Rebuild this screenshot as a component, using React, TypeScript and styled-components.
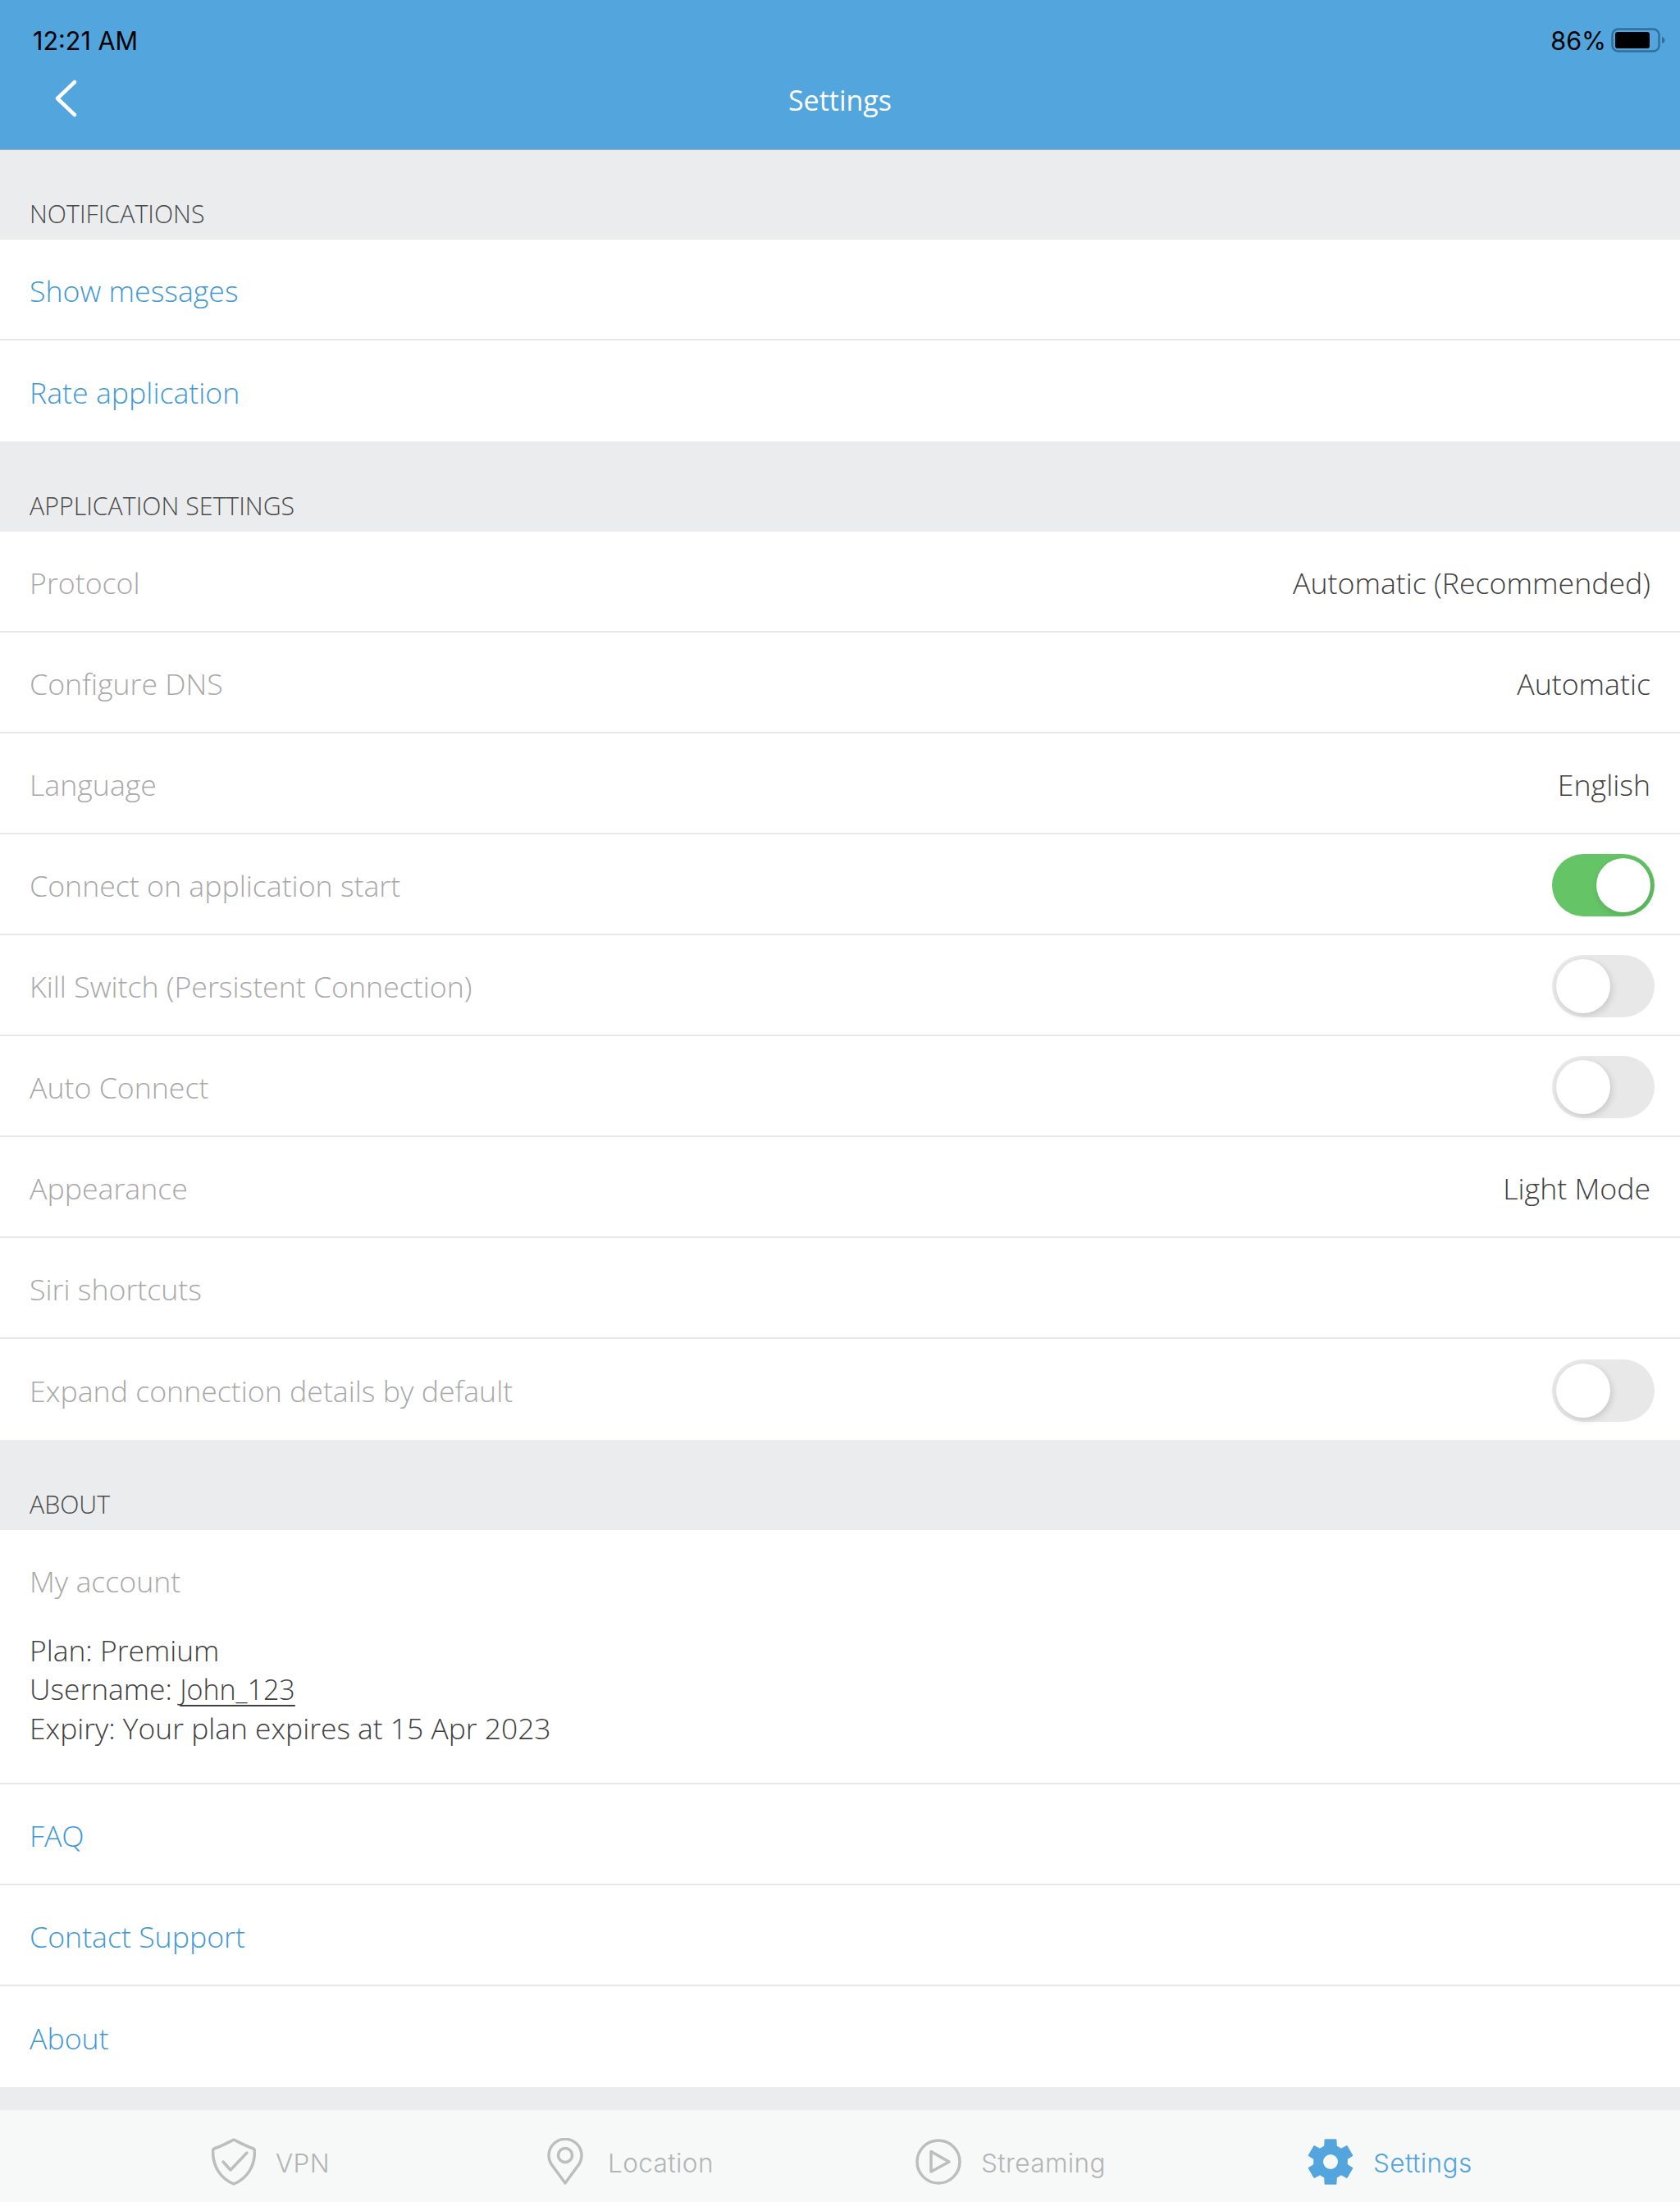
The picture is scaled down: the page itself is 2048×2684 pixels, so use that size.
import React from 'react';
import styled, { createGlobalStyle } from 'styled-components';

const Global = createGlobalStyle`
  html, body { margin: 0; padding: 0; background: #ebecee; }
  body { font-family: "Open Sans", "Liberation Sans", sans-serif; }
`;
const Page = styled.div`
  width: 2048px; height: 2684px; display: flex; flex-direction: column; background: #ebecee; overflow: hidden;
`;
const Header = styled.header`
  height: 182px; background: #53a5dd; border-bottom: 1px solid #a9adb0; display: flex; flex-direction: column; flex: none;
`;
const StatusBar = styled.div`
  display: flex; justify-content: space-between; align-items: center;
  height: 38px; padding: 30px 18px 0 40px; color: #000;
  font-family: Inter, "Liberation Sans", sans-serif; font-size: 30.500px;
`;
const StatusRight = styled.div`display: flex; align-items: center; gap: 6px;`;
const NavBar = styled.div`
  height: 108px; display: grid; grid-template-columns: 1fr auto 1fr; align-items: center; padding-left: 66px;
`;
const BackIcon = styled.svg`margin-bottom: 5px;`;
const Title = styled.div`color: #fff; font-size: 34px; font-weight: 400; margin-left: -66px;`;
const SectionTitle = styled.div<{ $h: number }>`
  height: ${p => p.$h}px; box-sizing: border-box; padding: 0 36px 10px; display: flex; align-items: flex-end;
  font-size: 30.300px; font-weight: 300; line-height: 42px; color: #4a4a4a; flex: none;
`;
const List = styled.div`background: #fff; flex: none;`;
const Row = styled.div`
  height: 123px; box-sizing: border-box; padding: 2px 36px 0; display: flex; align-items: center; justify-content: space-between;
  font-size: 35.700px; font-weight: 300; border-bottom: 2px solid #e8e8e8;
  &:last-child { border-bottom: none; }
`;
const LinkText = styled.span`color: #4098d8;`;
const Muted = styled.span`color: #a8a8a8;`;
const Value = styled.span`color: #404040;`;
const Toggle = styled.div<{ $on?: boolean }>`
  position: relative; width: 125px; height: 76px; border-radius: 38px; margin-right: -5px;
  background: ${p => (p.$on ? '#64c466' : '#e8e8e8')};
`;
const Knob = styled.div<{ $on?: boolean }>`
  position: absolute; top: 5px; width: 66px; height: 66px; border-radius: 50%; background: #fff;
  ${p => (p.$on ? 'right: 5px;' : 'left: 5px;')}
  box-shadow: 2px 3px 8px rgba(0,0,0,.14);
`;
const Account = styled.div`
  height: 310px; box-sizing: border-box; padding: 37px 36px 0; border-bottom: 2px solid #e8e8e8; font-size: 35.400px; font-weight: 300; color: #404040;
`;
const AccountHead = styled.div`line-height: 50px; margin-bottom: 36px; font-size: 35.700px;`;
const AccountLine = styled.div`line-height: 47px;`;
const Username = styled.span`font-size: 34px; text-decoration: underline; text-underline-offset: 6px; text-decoration-thickness: 2px;`;
const Spacer = styled.div`height: 28px; flex: none;`;
const TabBar = styled.nav`
  flex: 1; background: #f7f8f8; display: flex; align-items: center; padding: 20px 0 6px 258px;
`;
const Tab = styled.div<{ $active?: boolean; $w?: number }>`
  display: flex; align-items: center; gap: 24px; font-family: Inter, "Liberation Sans", sans-serif; font-weight: 300;
  font-size: 31.500px; letter-spacing: 0.4px; color: ${p => (p.$active ? '#53a5dd' : '#b4b4b4')};
  ${p => (p.$w ? `width: ${p.$w}px;` : '')}
`;
const TabLabel = styled.span<{ $offset?: number }>`
  padding-top: 2px; margin-left: ${p => p.$offset ?? 0}px;
`;

const Battery = () => (
  <svg width="66" height="30" viewBox="0 0 66 30">
    <rect x="1.500" y="1.500" width="57" height="27" rx="7" fill="none" stroke="#2f6f9c" strokeWidth="2.500" />
    <rect x="5" y="5" width="42" height="20" rx="3" fill="#000" />
    <path d="M62 11c2 .5 3.500 2 3.500 4s-1.500 3.500-3.500 4z" fill="#2f6f9c" />
  </svg>
);
const Back = () => (
  <BackIcon width="28" height="46" viewBox="0 0 28 46"><path d="M25 3 4 23l21 20" fill="none" stroke="#fff" strokeWidth="4.500" strokeLinecap="round" strokeLinejoin="round" /></BackIcon>
);
const Shield = () => (
  <svg width="54" height="58" viewBox="0 0 54 58" fill="none" stroke="#bdbdbd" strokeWidth="3.500" strokeLinejoin="round" strokeLinecap="round">
    <path d="M27 2C33 5 42 10 50 12.500c2 .6 2.500 1.500 2.500 3.500C52.500 34 44 49 27 56 10 49 1.500 34 1.500 16c0-2 .5-2.900 2.500-3.500C12 10 21 5 27 2z" />
    <path d="M14 29l9 10 20-21" />
  </svg>
);
const Pin = () => (
  <svg width="44" height="58" viewBox="0 0 44 58" fill="none" stroke="#bdbdbd" strokeWidth="3.500" strokeLinejoin="round">
    <path d="M22 55 4.800 31.500a20 20 0 1 1 34.400 0z" />
    <circle cx="22" cy="21" r="8.500" />
  </svg>
);
const Play = () => (
  <svg width="56" height="56" viewBox="0 0 56 56" fill="none" stroke="#bdbdbd" strokeWidth="3.500" strokeLinejoin="round">
    <circle cx="28" cy="28" r="26" />
    <path d="M19 15.500 41 28 19 40z" />
  </svg>
);
const gearPath = (() => {
  const pts: string[] = [];
  const teeth = 6, cx = 28, cy = 28, ro = 28, ri = 20.500;
  for (let i = 0; i < teeth; i++) {
    const a = (i / teeth) * Math.PI * 2 - Math.PI / 2;
    const p = (r: number, t: number) => `${(cx + r * Math.cos(t)).toFixed(2)} ${(cy + r * Math.sin(t)).toFixed(2)}`;
    pts.push(p(ri, a - 0.36), p(ro, a - 0.25), p(ro, a + 0.25), p(ri, a + 0.36));
  }
  return `M${pts.join('L')}Z`;
})();
const Gear = () => (
  <svg width="56" height="56" viewBox="0 0 56 56">
    <path d={gearPath} fill="#53a5dd" stroke="#53a5dd" strokeWidth="1" strokeLinejoin="round" />
    <circle cx="28" cy="28" r="9" fill="#f7f8f8" />
  </svg>
);

const Switch = ({ on }: { on?: boolean }) => <Toggle $on={on}><Knob $on={on} /></Toggle>;

export default function App() {
  return (
    <Page>
      <Global />
      <Header>
        <StatusBar>
          <span>12:21 AM</span>
          <StatusRight><span>86%</span><Battery /></StatusRight>
        </StatusBar>
        <NavBar>
          <Back />
          <Title>Settings</Title>
          <span />
        </NavBar>
      </Header>
      <SectionTitle $h={109}>NOTIFICATIONS</SectionTitle>
      <List>
        <Row><LinkText>Show messages</LinkText></Row>
        <Row><LinkText>Rate application</LinkText></Row>
      </List>
      <SectionTitle $h={110}>APPLICATION SETTINGS</SectionTitle>
      <List>
        <Row><Muted>Protocol</Muted><Value>Automatic (Recommended)</Value></Row>
        <Row><Muted>Configure DNS</Muted><Value>Automatic</Value></Row>
        <Row><Muted>Language</Muted><Value>English</Value></Row>
        <Row><Muted>Connect on application start</Muted><Switch on /></Row>
        <Row><Muted>Kill Switch (Persistent Connection)</Muted><Switch /></Row>
        <Row><Muted>Auto Connect</Muted><Switch /></Row>
        <Row><Muted>Appearance</Muted><Value>Light Mode</Value></Row>
        <Row><Muted>Siri shortcuts</Muted></Row>
        <Row><Muted>Expand connection details by default</Muted><Switch /></Row>
      </List>
      <SectionTitle $h={110}>ABOUT</SectionTitle>
      <List>
        <Account>
          <AccountHead><Muted>My account</Muted></AccountHead>
          <AccountLine>Plan: Premium</AccountLine>
          <AccountLine>Username: <Username>John_123</Username></AccountLine>
          <AccountLine>Expiry: Your plan expires at 15 Apr 2023</AccountLine>
        </Account>
        <Row><LinkText>FAQ</LinkText></Row>
        <Row><LinkText>Contact Support</LinkText></Row>
        <Row><LinkText>About</LinkText></Row>
      </List>
      <Spacer />
      <TabBar>
        <Tab $w={409}><Shield /><TabLabel>VPN</TabLabel></Tab>
        <Tab $w={449}><Pin /><TabLabel $offset={6}>Location</TabLabel></Tab>
        <Tab $w={478}><Play /><TabLabel>Streaming</TabLabel></Tab>
        <Tab $active><Gear /><TabLabel>Settings</TabLabel></Tab>
      </TabBar>
    </Page>
  );
}
